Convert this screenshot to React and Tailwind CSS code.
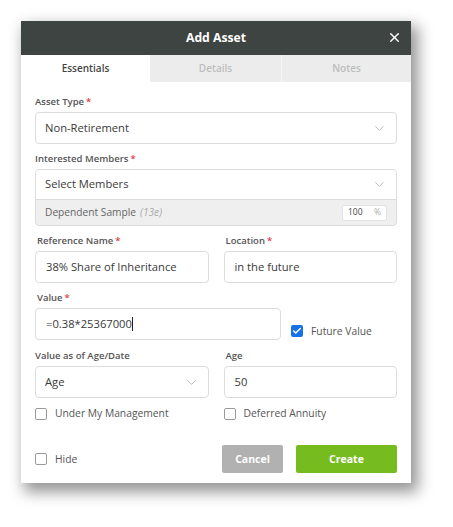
import { Check, X, ChevronDown } from 'lucide-react';

function Label({ children, required, className = '' }) {
  return (
    <div className={`h-[14px] leading-[14px] mb-[3px] text-[9.5px] font-semibold text-[#555] ${className}`}>
      {children}
      {required && <span className="text-[#e0393e] ml-[2px]">*</span>}
    </div>
  );
}

function Box({ children, className = '' }) {
  return (
    <div className={`h-[32px] flex items-center px-[9px] border border-[#dcdcdc] rounded-[4px] bg-white text-[11.2px] text-[#3a3a3a] ${className}`}>
      {children}
    </div>
  );
}

function Chevron() {
  return <ChevronDown size={15} strokeWidth={1.3} className="ml-auto text-[#a9a9a9]" />;
}

function Checkbox({ checked }) {
  return checked ? (
    <span className="w-[12px] h-[12px] rounded-[2px] bg-[#1673e6] flex items-center justify-center shrink-0">
      <Check size={10} strokeWidth={3.5} className="text-white" />
    </span>
  ) : (
    <span className="w-[12px] h-[12px] rounded-[2px] border border-[#9a9a9a] bg-white shrink-0" />
  );
}

function CheckRow({ checked, children }) {
  return (
    <div className="flex items-center gap-[8px] text-[10.3px] text-[#555]">
      <Checkbox checked={checked} />
      <span>{children}</span>
    </div>
  );
}

export default function App() {
  return (
    <div className="min-h-[527px] bg-white pt-[21px] pl-[21px]" style={{ fontFamily: '"Open Sans", "Liberation Sans", sans-serif' }}>
      <div className="w-[390px] bg-white shadow-[5px_7px_14px_2px_rgba(0,0,0,0.42)]">
        {/* Header */}
        <div className="relative h-[34px] bg-[#3e4442] flex items-center justify-center">
          <span className="text-white font-bold text-[12.2px]">Add Asset</span>
          <button className="absolute right-[9px] top-[9px] text-white">
            <X size={15} strokeWidth={2.3} />
          </button>
        </div>

        {/* Tabs */}
        <div className="grid grid-cols-[129px_131px_130px] h-[27px] text-[10px] font-semibold">
          <div className="flex items-center justify-center bg-white text-[#444]">Essentials</div>
          <div className="flex items-center justify-center bg-[#ececec] text-[#bdbdbd]">Details</div>
          <div className="flex items-center justify-center bg-[#ececec] text-[#bdbdbd] border-l border-[#f7f7f7]">Notes</div>
        </div>

        {/* Body */}
        <div className="px-[14px] pt-[13px] pb-[10px]">
          <Label required>Asset Type</Label>
          <Box>
            Non-Retirement
            <Chevron />
          </Box>

          <div className="mt-[8px]">
            <Label required>Interested Members</Label>
            <div className="border border-[#dcdcdc] rounded-[4px] overflow-hidden bg-[#efefef]">
              <div className="h-[30px] flex items-center px-[9px] bg-white border-b border-[#dcdcdc] text-[11.2px] text-[#3a3a3a]">
                Select Members
                <Chevron />
              </div>
              <div className="h-[25px] flex items-center pl-[9px] pr-[9px] text-[10.2px] text-[#666]">
                Dependent Sample
                <span className="italic text-[#aaa] ml-[4px]">(13e)</span>
                <div className="ml-auto w-[45px] h-[16px] bg-white border border-[#e2e2e2] rounded-[2px] flex items-center px-[5px] text-[8.5px] text-[#444]">
                  100
                  <span className="ml-auto text-[#aaa]">%</span>
                </div>
              </div>
            </div>
          </div>

          <div className="mt-[8px] grid grid-cols-2 gap-x-[15px]">
            <div>
              <Label required className="pl-[2px]">Reference Name</Label>
              <Box className="h-[31px] px-[10px]">38% Share of Inheritance</Box>
            </div>
            <div>
              <Label required className="pl-[2px]">Location</Label>
              <Box className="h-[31px] px-[10px]">in the future</Box>
            </div>
          </div>

          <div className="mt-[8px] flex items-end">
            <div className="w-[246px]">
              <Label required className="pl-[2px]">Value</Label>
              <Box className="bg-[#fcfcfc] border-[#cfcfcf] px-[10px]">
                =0.38*25367000
                <span className="w-px h-[14px] bg-[#222]" />
              </Box>
            </div>
            <div className="ml-[10px] mb-[1px]">
              <CheckRow checked>Future Value</CheckRow>
            </div>
          </div>

          <div className="mt-[9px] grid grid-cols-2 gap-x-[15px]">
            <div>
              <Label>Value as of Age/Date</Label>
              <Box>
                Age
                <Chevron />
              </Box>
            </div>
            <div>
              <Label className="pl-[2px]">Age</Label>
              <Box className="px-[10px]">50</Box>
            </div>
          </div>

          <div className="mt-[8px] grid grid-cols-2 gap-x-[15px]">
            <CheckRow>Under My Management</CheckRow>
            <CheckRow>Deferred Annuity</CheckRow>
          </div>

          <div className="mt-[24px] flex items-center">
            <CheckRow>Hide</CheckRow>
            <button className="ml-auto w-[61px] h-[28px] rounded-[2px] bg-[#b0b1b0] text-white font-bold text-[10.5px]">Cancel</button>
            <button className="ml-[13px] w-[101px] h-[28px] rounded-[2px] bg-[#77bc1f] text-white font-bold text-[10.5px]">Create</button>
          </div>
        </div>
      </div>
    </div>
  );
}
